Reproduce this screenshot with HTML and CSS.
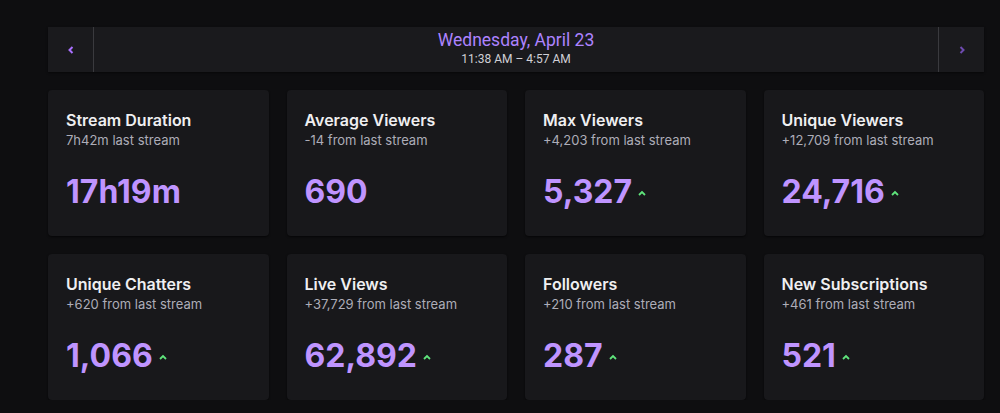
FILE: index.html
```html
<!DOCTYPE html>
<html>
<head>
<meta charset="utf-8">
<link rel="stylesheet" href="styles.css">
</head>
<body>
<div class="page">
  <div class="datebar">
    <div class="nav nav-left">
      <svg width="6" height="8" viewBox="0 0 6 8"><polyline points="4.5,1 1.5,4 4.5,7" fill="none" stroke="#a970ff" stroke-width="2"/></svg>
    </div>
    <div class="date-center">
      <div class="date">Wednesday, April 23</div>
      <div class="time">11:38 AM – 4:57 AM</div>
    </div>
    <div class="nav nav-right">
      <svg width="6" height="8" viewBox="0 0 6 8"><polyline points="1.5,1 4.5,4 1.5,7" fill="none" stroke="#6e4bb0" stroke-width="2"/></svg>
    </div>
  </div>

  <div class="grid">
    <div class="card">
      <div class="title">Stream Duration</div>
      <div class="sub">7h42m last stream</div>
      <div class="value"><span class="num">17h19m</span></div>
    </div>
    <div class="card">
      <div class="title">Average Viewers</div>
      <div class="sub">-14 from last stream</div>
      <div class="value"><span class="num">690</span></div>
    </div>
    <div class="card">
      <div class="title">Max Viewers</div>
      <div class="sub">+4,203 from last stream</div>
      <div class="value"><span class="num">5,327</span><svg class="up" width="8" height="6" viewBox="0 0 8 6"><polyline points="1,5 4,2 7,5" fill="none" stroke="#5fe47c" stroke-width="1.8"/></svg></div>
    </div>
    <div class="card">
      <div class="title">Unique Viewers</div>
      <div class="sub">+12,709 from last stream</div>
      <div class="value"><span class="num">24,716</span><svg class="up" width="8" height="6" viewBox="0 0 8 6"><polyline points="1,5 4,2 7,5" fill="none" stroke="#5fe47c" stroke-width="1.8"/></svg></div>
    </div>
    <div class="card">
      <div class="title">Unique Chatters</div>
      <div class="sub">+620 from last stream</div>
      <div class="value"><span class="num">1,066</span><svg class="up" width="8" height="6" viewBox="0 0 8 6"><polyline points="1,5 4,2 7,5" fill="none" stroke="#5fe47c" stroke-width="1.8"/></svg></div>
    </div>
    <div class="card">
      <div class="title">Live Views</div>
      <div class="sub">+37,729 from last stream</div>
      <div class="value"><span class="num">62,892</span><svg class="up" width="8" height="6" viewBox="0 0 8 6"><polyline points="1,5 4,2 7,5" fill="none" stroke="#5fe47c" stroke-width="1.8"/></svg></div>
    </div>
    <div class="card">
      <div class="title">Followers</div>
      <div class="sub">+210 from last stream</div>
      <div class="value"><span class="num">287</span><svg class="up" width="8" height="6" viewBox="0 0 8 6"><polyline points="1,5 4,2 7,5" fill="none" stroke="#5fe47c" stroke-width="1.8"/></svg></div>
    </div>
    <div class="card">
      <div class="title">New Subscriptions</div>
      <div class="sub">+461 from last stream</div>
      <div class="value"><span class="num">521</span><svg class="up" width="8" height="6" viewBox="0 0 8 6"><polyline points="1,5 4,2 7,5" fill="none" stroke="#5fe47c" stroke-width="1.8"/></svg></div>
    </div>
  </div>
</div>
</body>
</html>
```

FILE: styles.css
```css
html, body {
  margin: 0;
  padding: 0;
  background: #0e0e10;
  font-family: Inter, "Noto Sans", sans-serif;
}

.page {
  width: 936px;
  padding: 27px 0 0 48px;
}

.datebar {
  display: flex;
  height: 45px;
  background: #1a1a1d;
  box-shadow: 0 1px 2px rgba(0, 0, 0, 0.5);
}

.nav {
  display: flex;
  align-items: center;
  justify-content: center;
}

.nav-left {
  width: 45px;
  border-right: 1px solid #3a3a3e;
}

.nav-right {
  width: 45px;
  border-left: 1px solid #3a3a3e;
}

.date-center {
  flex: 1;
  display: flex;
  flex-direction: column;
  align-items: center;
  padding-top: 4px;
}

.date {
  font-family: Roboto, "Liberation Sans", sans-serif;
  font-size: 17.5px;
  line-height: 19px;
  color: #ad83ff;
}

.time {
  font-family: Roboto, "Liberation Sans", sans-serif;
  font-size: 12px;
  line-height: 14px;
  margin-top: 2px;
  color: #d0d0d6;
}

.grid {
  display: grid;
  grid-template-columns: repeat(4, 1fr);
  gap: 18px;
  margin-top: 18px;
}

.card {
  background: #18181b;
  border-radius: 4px;
  height: 146px;
  box-sizing: border-box;
  padding: 20px 18px 0 18px;
  box-shadow: 0 1px 2px rgba(0, 0, 0, 0.6);
}

.title {
  font-size: 16px;
  line-height: 20px;
  font-weight: 600;
  color: #efeff1;
}

.sub {
  font-size: 13px;
  line-height: 18px;
  margin-top: 1px;
  color: #adadb8;
}

.value {
  display: flex;
  align-items: center;
  margin-top: 23px;
  height: 40px;
}

.num {
  font-size: 32px;
  line-height: 40px;
  font-weight: 700;
  color: #bf94ff;
}

.up {
  margin-left: 6px;
  margin-top: 1px;
}
```
